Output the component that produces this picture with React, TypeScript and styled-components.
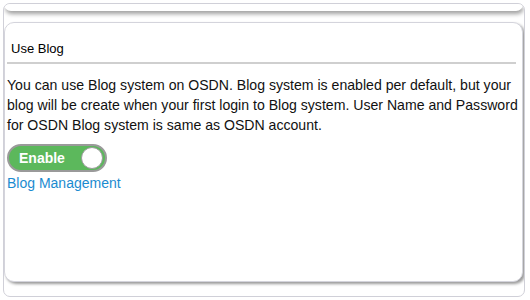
import styled, { createGlobalStyle } from "styled-components";

const GlobalStyle = createGlobalStyle`
  html, body {
    margin: 0;
    padding: 0;
    background: #fff;
    font-family: "Liberation Sans", Arial, sans-serif;
  }
`;

export default function App() {
  return (
    <>
      <GlobalStyle />
      <Frame>
        <PrevPanel />
        <Panel>
          <Header>
            <Title>Use Blog</Title>
          </Header>
          <Body>
            <Text>
              You can use Blog system on OSDN. Blog system is enabled per
              default, but your blog will be create when your first login to
              Blog system. User Name and Password for OSDN Blog system is same
              as OSDN account.
            </Text>
            <Toggle>
              <ToggleLabel>Enable</ToggleLabel>
              <Knob />
            </Toggle>
            <Link href="#">Blog Management</Link>
          </Body>
        </Panel>
      </Frame>
    </>
  );
}

const Frame = styled.div`
  box-sizing: border-box;
  margin: 3px 0 0 3px;
  width: 522px;
  height: 294px;
  border: 1px solid #d0d0d8;
  border-radius: 7px;
  display: flex;
  flex-direction: column;
  overflow: hidden;
`;

const PrevPanel = styled.div`
  height: 7px;
  margin: 0 1px 0 0;
  border-radius: 0 0 8px 8px;
  box-shadow: 1px 3px 4px #a0a0a0;
  background: #fff;
`;

const Panel = styled.div`
  box-sizing: border-box;
  margin: 11px 1px 0 0;
  height: 260px;
  border: 1px solid #d4d4dc;
  border-radius: 10px;
  box-shadow: 2px 2px 3px #9a9a9a;
  background: #fff;
  display: flex;
  flex-direction: column;
`;

const Header = styled.div`
  margin: 0 6px 0 2px;
  padding: 16px 0 5px 4px;
  border-bottom: 2px solid #cfcfcf;
`;

const Title = styled.span`
  font-size: 13px;
  color: #000;
`;

const Body = styled.div`
  padding: 11px 0 0 2px;
  display: flex;
  flex-direction: column;
  align-items: flex-start;
`;

const Text = styled.p`
  margin: 0;
  font-size: 14.1px;
  line-height: 20px;
  color: #111;
`;

const Toggle = styled.div`
  box-sizing: border-box;
  margin-top: 9px;
  width: 100px;
  height: 28px;
  border: 2px solid #9a9a9a;
  border-radius: 14px;
  background: #5cb85c;
  display: flex;
  align-items: center;
  justify-content: space-between;
  padding: 0 2px 0 10px;
`;

const ToggleLabel = styled.span`
  color: #fff;
  font-weight: bold;
  font-size: 14px;
`;

const Knob = styled.span`
  box-sizing: border-box;
  width: 22px;
  height: 22px;
  border-radius: 50%;
  background: #fff;
  border: 1px solid #9a9a9a;
`;

const Link = styled.a`
  margin-top: 3px;
  font-size: 14px;
  color: #1b8bd0;
  text-decoration: none;
`;
